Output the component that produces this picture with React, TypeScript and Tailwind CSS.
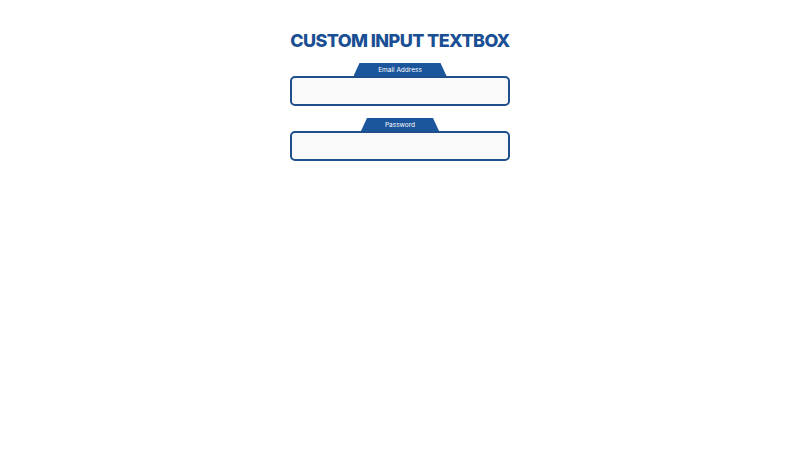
import { useState } from "react";

function TabInput({ label, type, tabWidth }: { label: string; type: string; tabWidth: string }) {
  const [value, setValue] = useState("");
  return (
    <div className="flex flex-col items-center">
      <div
        className={`flex h-[13px] items-center justify-center rounded-t-[3px] bg-[#1b559c] pt-[2px] text-[6.5px] text-white ${tabWidth}`}
        style={{ clipPath: "polygon(6px 0, calc(100% - 6px) 0, 100% 100%, 0 100%)" }}
      >
        {label}
      </div>
      <input
        type={type}
        value={value}
        onChange={(e) => setValue(e.target.value)}
        className="h-[30px] w-[220px] rounded-[5px] border-2 border-[#1e4f8c] bg-[#f9f9f9] px-2 text-xs outline-none"
      />
    </div>
  );
}

export default function App() {
  return (
    <div
      className="flex min-h-[450px] flex-col items-center bg-white pt-[30px]"
      style={{ fontFamily: "Inter, 'Noto Sans', sans-serif" }}
    >
      <h1 className="text-[18px] font-extrabold leading-[22px] tracking-[-0.6px] text-[#1b4f93]">
        CUSTOM INPUT TEXTBOX
      </h1>
      <div className="mt-[11px] flex flex-col gap-[12px]">
        <TabInput label="Email Address" type="email" tabWidth="w-[93px]" />
        <TabInput label="Password" type="password" tabWidth="w-[78px]" />
      </div>
    </div>
  );
}
